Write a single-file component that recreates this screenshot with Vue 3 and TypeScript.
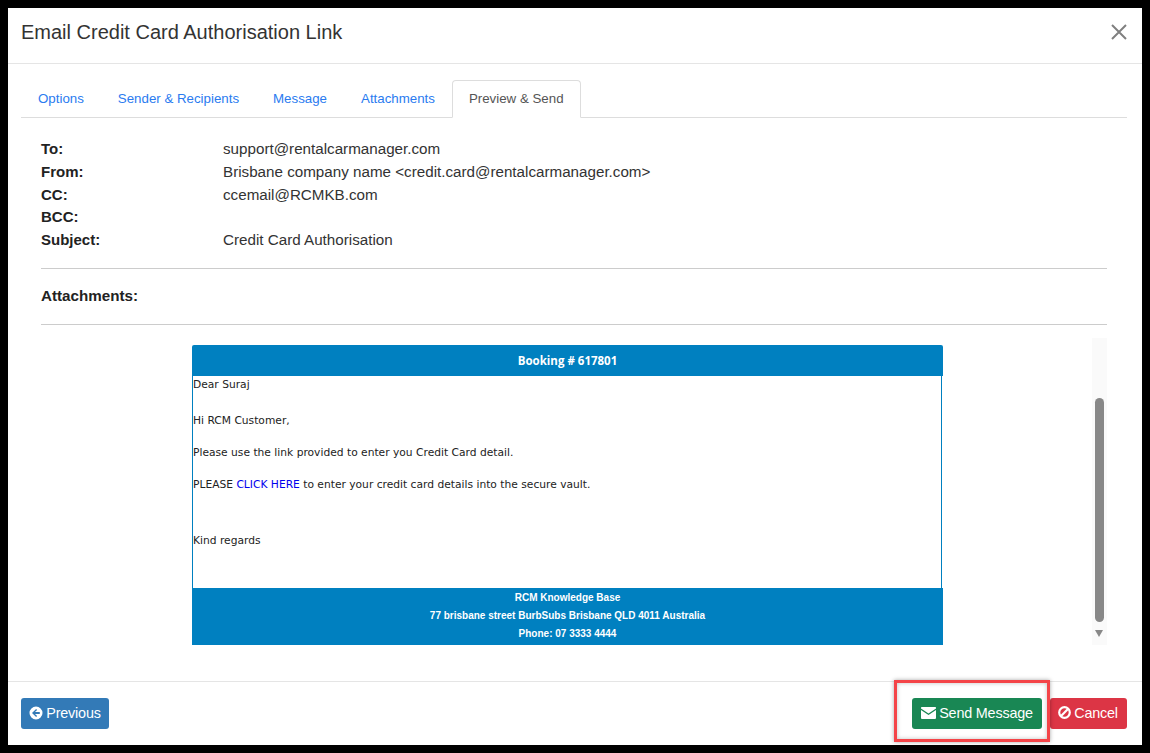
<template>
  <div class="frame">
    <div class="modal">
      <div class="modal-header">
        <h4 class="modal-title">Email Credit Card Authorisation Link</h4>
        <svg class="close" width="16" height="16" viewBox="0 0 16 16">
          <path d="M1 1 L15 15 M15 1 L1 15" stroke="#808080" stroke-width="2" fill="none" />
        </svg>
      </div>

      <div class="modal-body">
        <div class="tabs">
          <a v-for="tab in tabs" :key="tab" class="tab" :class="{ active: tab === activeTab }">{{ tab }}</a>
        </div>

        <div class="details">
          <div class="detail-row" v-for="row in details" :key="row.label">
            <span class="label">{{ row.label }}</span>
            <span class="value">{{ row.value }}</span>
          </div>
        </div>

        <div class="attachments">Attachments:</div>

        <div class="preview">
          <div class="email">
            <div class="email-head">Booking # 617801</div>
            <div class="email-body">
              <p class="line-dear">Dear Suraj</p>
              <p class="line-hi">Hi RCM Customer,</p>
              <p class="line">Please use the link provided to enter you Credit Card detail.</p>
              <p class="line">PLEASE <a class="email-link">CLICK HERE</a> to enter your credit card details into the secure vault.</p>
              <p class="line-regards">Kind regards</p>
            </div>
            <div class="email-foot">
              <div v-for="line in footerLines" :key="line">{{ line }}</div>
            </div>
          </div>
          <div class="scrollbar">
            <div class="thumb"></div>
            <div class="arrow"></div>
          </div>
        </div>
      </div>

      <div class="modal-footer">
        <button class="btn btn-blue">
          <svg width="14" height="14" viewBox="0 0 14 14">
            <path fill="#fff" fill-rule="evenodd" d="M7 0.5a6.5 6.5 0 1 0 0 13a6.5 6.5 0 1 0 0-13z M7.1 2.9 L8.1 3.9 L6 6 H10.8 V8 H6 L8.1 10.1 L7.1 11.1 L3 7 z" />
          </svg>
          Previous
        </button>
        <div class="spacer"></div>
        <button class="btn btn-green">
          <svg width="15" height="12" viewBox="0 0 15 12">
            <path fill="#fff" d="M0.8 0H14.2Q15 0 15 .8V1.4L7.5 6.6L0 1.4V.8Q0 0 .8 0z" />
            <path fill="#fff" d="M0 2.9L7.5 8.1L15 2.9V11Q15 12 14 12H1Q0 12 0 11z" />
          </svg>
          Send Message
        </button>
        <button class="btn btn-red">
          <svg width="13" height="13" viewBox="0 0 13 13">
            <circle cx="6.5" cy="6.5" r="5.3" fill="none" stroke="#fff" stroke-width="2.2" />
            <path d="M2.8 10.2 L10.2 2.8" stroke="#fff" stroke-width="2.2" />
          </svg>
          Cancel
        </button>
        <div class="highlight"></div>
      </div>
    </div>
  </div>
</template>

<script setup lang="ts">
const tabs = ['Options', 'Sender & Recipients', 'Message', 'Attachments', 'Preview & Send']
const activeTab = 'Preview & Send'

const details = [
  { label: 'To:', value: 'support@rentalcarmanager.com' },
  { label: 'From:', value: 'Brisbane company name <credit.card@rentalcarmanager.com>' },
  { label: 'CC:', value: 'ccemail@RCMKB.com' },
  { label: 'BCC:', value: '' },
  { label: 'Subject:', value: 'Credit Card Authorisation' }
]

const footerLines = [
  'RCM Knowledge Base',
  '77 brisbane street BurbSubs Brisbane QLD 4011 Australia',
  'Phone: 07 3333 4444'
]
</script>

<style>
html, body {
  margin: 0;
  background: #000;
}
</style>

<style scoped>
.frame {
  padding: 8px;
  height: 753px;
  box-sizing: border-box;
  background: #000;
  font-family: "Liberation Sans", Arial, sans-serif;
}

.modal {
  width: 1134px;
  height: 737px;
  background: #fff;
  display: flex;
  flex-direction: column;
}

.modal-header {
  height: 56px;
  flex: none;
  box-sizing: border-box;
  border-bottom: 1px solid #e5e5e5;
  padding: 0 15px 0 13px;
  display: flex;
  align-items: center;
  justify-content: space-between;
}

.modal-title {
  margin: 0 0 7px 0;
  font-size: 20px;
  font-weight: 400;
  color: #333;
}

.close {
  margin-bottom: 8px;
}

.modal-body {
  flex: 1;
  padding: 16px 15px 0 13px;
  display: flex;
  flex-direction: column;
}

.tabs {
  display: flex;
  height: 38px;
  box-sizing: border-box;
  border-bottom: 1px solid #ddd;
}

.tab {
  height: 38px;
  box-sizing: border-box;
  padding: 0 16px;
  line-height: 36px;
  font-size: 13.3px;
  color: #2a7bf0;
  border: 1px solid transparent;
}

.tab.active {
  color: #555;
  background: #fff;
  border-color: #ddd #ddd #fff;
  border-radius: 4px 4px 0 0;
}

.details {
  margin: 20px 20px 0 20px;
  padding-bottom: 16px;
  border-bottom: 1px solid #ccc;
}

.detail-row {
  display: flex;
  height: 22.75px;
  line-height: 22.75px;
  font-size: 15.2px;
}

.label {
  width: 182px;
  font-size: 15px;
  font-weight: 700;
  color: #222;
}

.value {
  color: #333;
}

.attachments {
  margin: 0 20px;
  height: 56px;
  line-height: 54px;
  box-sizing: border-box;
  border-bottom: 1px solid #ccc;
  font-size: 15.2px;
  font-weight: 700;
  color: #222;
}

.preview {
  display: flex;
  margin: 13px 20px 0 20px;
  height: 307px;
}

.email {
  width: 751px;
  margin: 7px 0 0 151px;
  height: 300px;
  display: flex;
  flex-direction: column;
}

.email-head {
  height: 31px;
  flex: none;
  background: #0080c0;
  color: #fff;
  border-radius: 2px 2px 0 0;
  text-align: center;
  font-family: "Open Sans", "DejaVu Sans", sans-serif;
  font-size: 11.5px;
  font-weight: 700;
  line-height: 31px;
}

.email-body {
  flex: 1;
  margin-right: 1px;
  padding-top: 1px;
  border-left: 1px solid #0080c0;
  border-right: 1px solid #0080c0;
  font-family: "DejaVu Sans", Verdana, sans-serif;
  font-size: 10.7px;
  line-height: 16px;
  color: #222;
}

.email-body p {
  margin: 0;
}

.line-hi {
  padding-top: 20px;
}

.line {
  padding-top: 16px;
}

.line-regards {
  padding-top: 40px;
}

.email-link {
  color: #0000ee;
}

.email-foot {
  flex: none;
  height: 57px;
  box-sizing: border-box;
  padding-top: 1px;
  background: #0080c0;
  color: #fff;
  text-align: center;
  font-size: 10px;
  font-weight: 700;
  line-height: 18px;
}

.scrollbar {
  position: relative;
  width: 15px;
  margin-left: 149px;
  background: #fafafa;
  box-sizing: border-box;
  padding: 60px 3px 0 3px;
}

.thumb {
  height: 224px;
  background: #888;
  border-radius: 5px;
}

.arrow {
  width: 0;
  height: 0;
  margin-top: 8px;
  border-left: 4.5px solid transparent;
  border-right: 4.5px solid transparent;
  border-top: 7px solid #888;
}

.modal-footer {
  position: relative;
  flex: none;
  height: 64px;
  box-sizing: border-box;
  border-top: 1px solid #e5e5e5;
  padding: 16px 15px 0 13px;
  display: flex;
  align-items: flex-start;
}

.spacer {
  flex: 1;
}

.btn {
  height: 31px;
  box-sizing: border-box;
  border: 0;
  border-radius: 3px;
  color: #fff;
  font-family: "Liberation Sans", Arial, sans-serif;
  font-size: 14.4px;
  letter-spacing: -0.2px;
  display: flex;
  align-items: center;
  justify-content: center;
  gap: 3px;
  padding: 0 0 2px 0;
}

.btn-blue {
  width: 88px;
  background: #337ab7;
}

.btn-green {
  width: 130px;
  background: #198754;
  margin-right: 8px;
}

.btn-red {
  width: 77px;
  background: #dc3545;
  padding-right: 1px;
}

.highlight {
  position: absolute;
  left: 886px;
  top: -2px;
  width: 156px;
  height: 62px;
  box-sizing: border-box;
  border: 3px solid #f44448;
  box-shadow: 0 0 4px rgba(0, 0, 0, 0.35), inset 0 0 4px rgba(0, 0, 0, 0.25);
  pointer-events: none;
}
</style>
